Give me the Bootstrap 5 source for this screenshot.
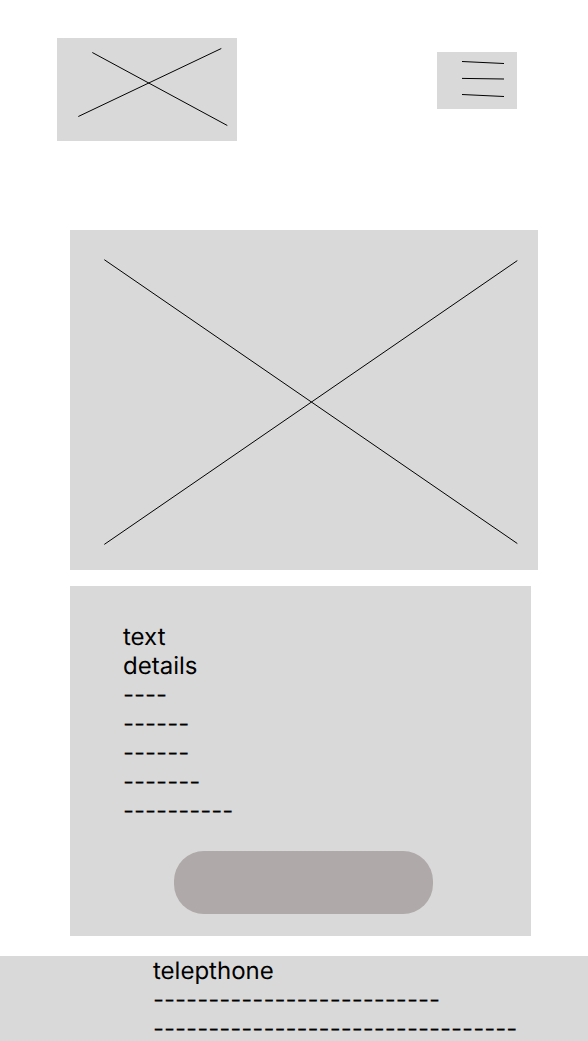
<!DOCTYPE html>
<html lang="en">
<head>
<meta charset="utf-8">
<meta name="viewport" content="width=device-width, initial-scale=1">
<title>Contact</title>
<link href="https://cdn.jsdelivr.net/npm/bootstrap@5.3.0/dist/css/bootstrap.min.css" rel="stylesheet">
<style>
  body { font-family: Inter, sans-serif; font-size: 24px; line-height: 29px; font-optical-sizing: none; text-rendering: geometricPrecision; color: #000; background: #fff; }
  svg { stroke: #000; stroke-width: 1; fill: none; }
  .block { background: #d9d9d9; }
  .site-head { padding: 38px 71px 0 57px; margin-bottom: 89px; }
  .logo { width: 180px; height: 103px; }
  .menu-btn { width: 80px; height: 57px; margin-top: 14px; }
  .hero { height: 340px; margin: 0 50px 16px 70px; }
  .details { margin: 0 57px 20px 70px; padding: 36px 0 22px; }
  .details-text { padding-left: 53px; margin-bottom: 26px; }
  .action { padding: 0 98px 0 104px; }
  .action-btn { height: 63px; border-radius: 30px; background: #afa9a9; }
  .site-foot { padding-left: 153px; }
</style>
</head>
<body>
<header class="site-head d-flex justify-content-between align-items-start">
  <a href="#" class="logo block d-block" aria-label="Home">
    <svg class="d-block" width="180" height="103" viewBox="0 0 180 103" aria-hidden="true">
      <path d="M35.3 14.5 170.3 87.5M164.3 10.5 21.3 78.5"/>
    </svg>
  </a>
  <button type="button" class="menu-btn block border-0 p-0" aria-label="Menu">
    <svg class="d-block" width="80" height="57" viewBox="0 0 80 57" aria-hidden="true">
      <path d="M25 9.5 67 11.5M25 26.4 67 27M25 42.5 67 44.5"/>
    </svg>
  </button>
</header>
<main>
  <div class="hero block">
    <svg class="d-block w-100 h-100" viewBox="0 0 468 340" preserveAspectRatio="none" aria-hidden="true">
      <path vector-effect="non-scaling-stroke" d="M34.3 29.7 447.3 313.5M34.3 314.4 447.3 30.6"/>
    </svg>
  </div>
  <section class="details block">
    <div class="details-text text-nowrap">
      <p class="m-0">text<br>details</p>
      <p class="m-0">----<br>------<br>------<br>-------<br>----------</p>
    </div>
    <div class="action">
      <button type="button" class="action-btn d-block w-100 border-0" aria-label="Continue"></button>
    </div>
  </section>
</main>
<footer class="site-foot block text-nowrap">
  <p class="m-0">telepthone<br>--------------------------<br>---------------------------------</p>
</footer>
<script src="https://cdn.jsdelivr.net/npm/bootstrap@5.3.0/dist/js/bootstrap.bundle.min.js"></script>
</body>
</html>
